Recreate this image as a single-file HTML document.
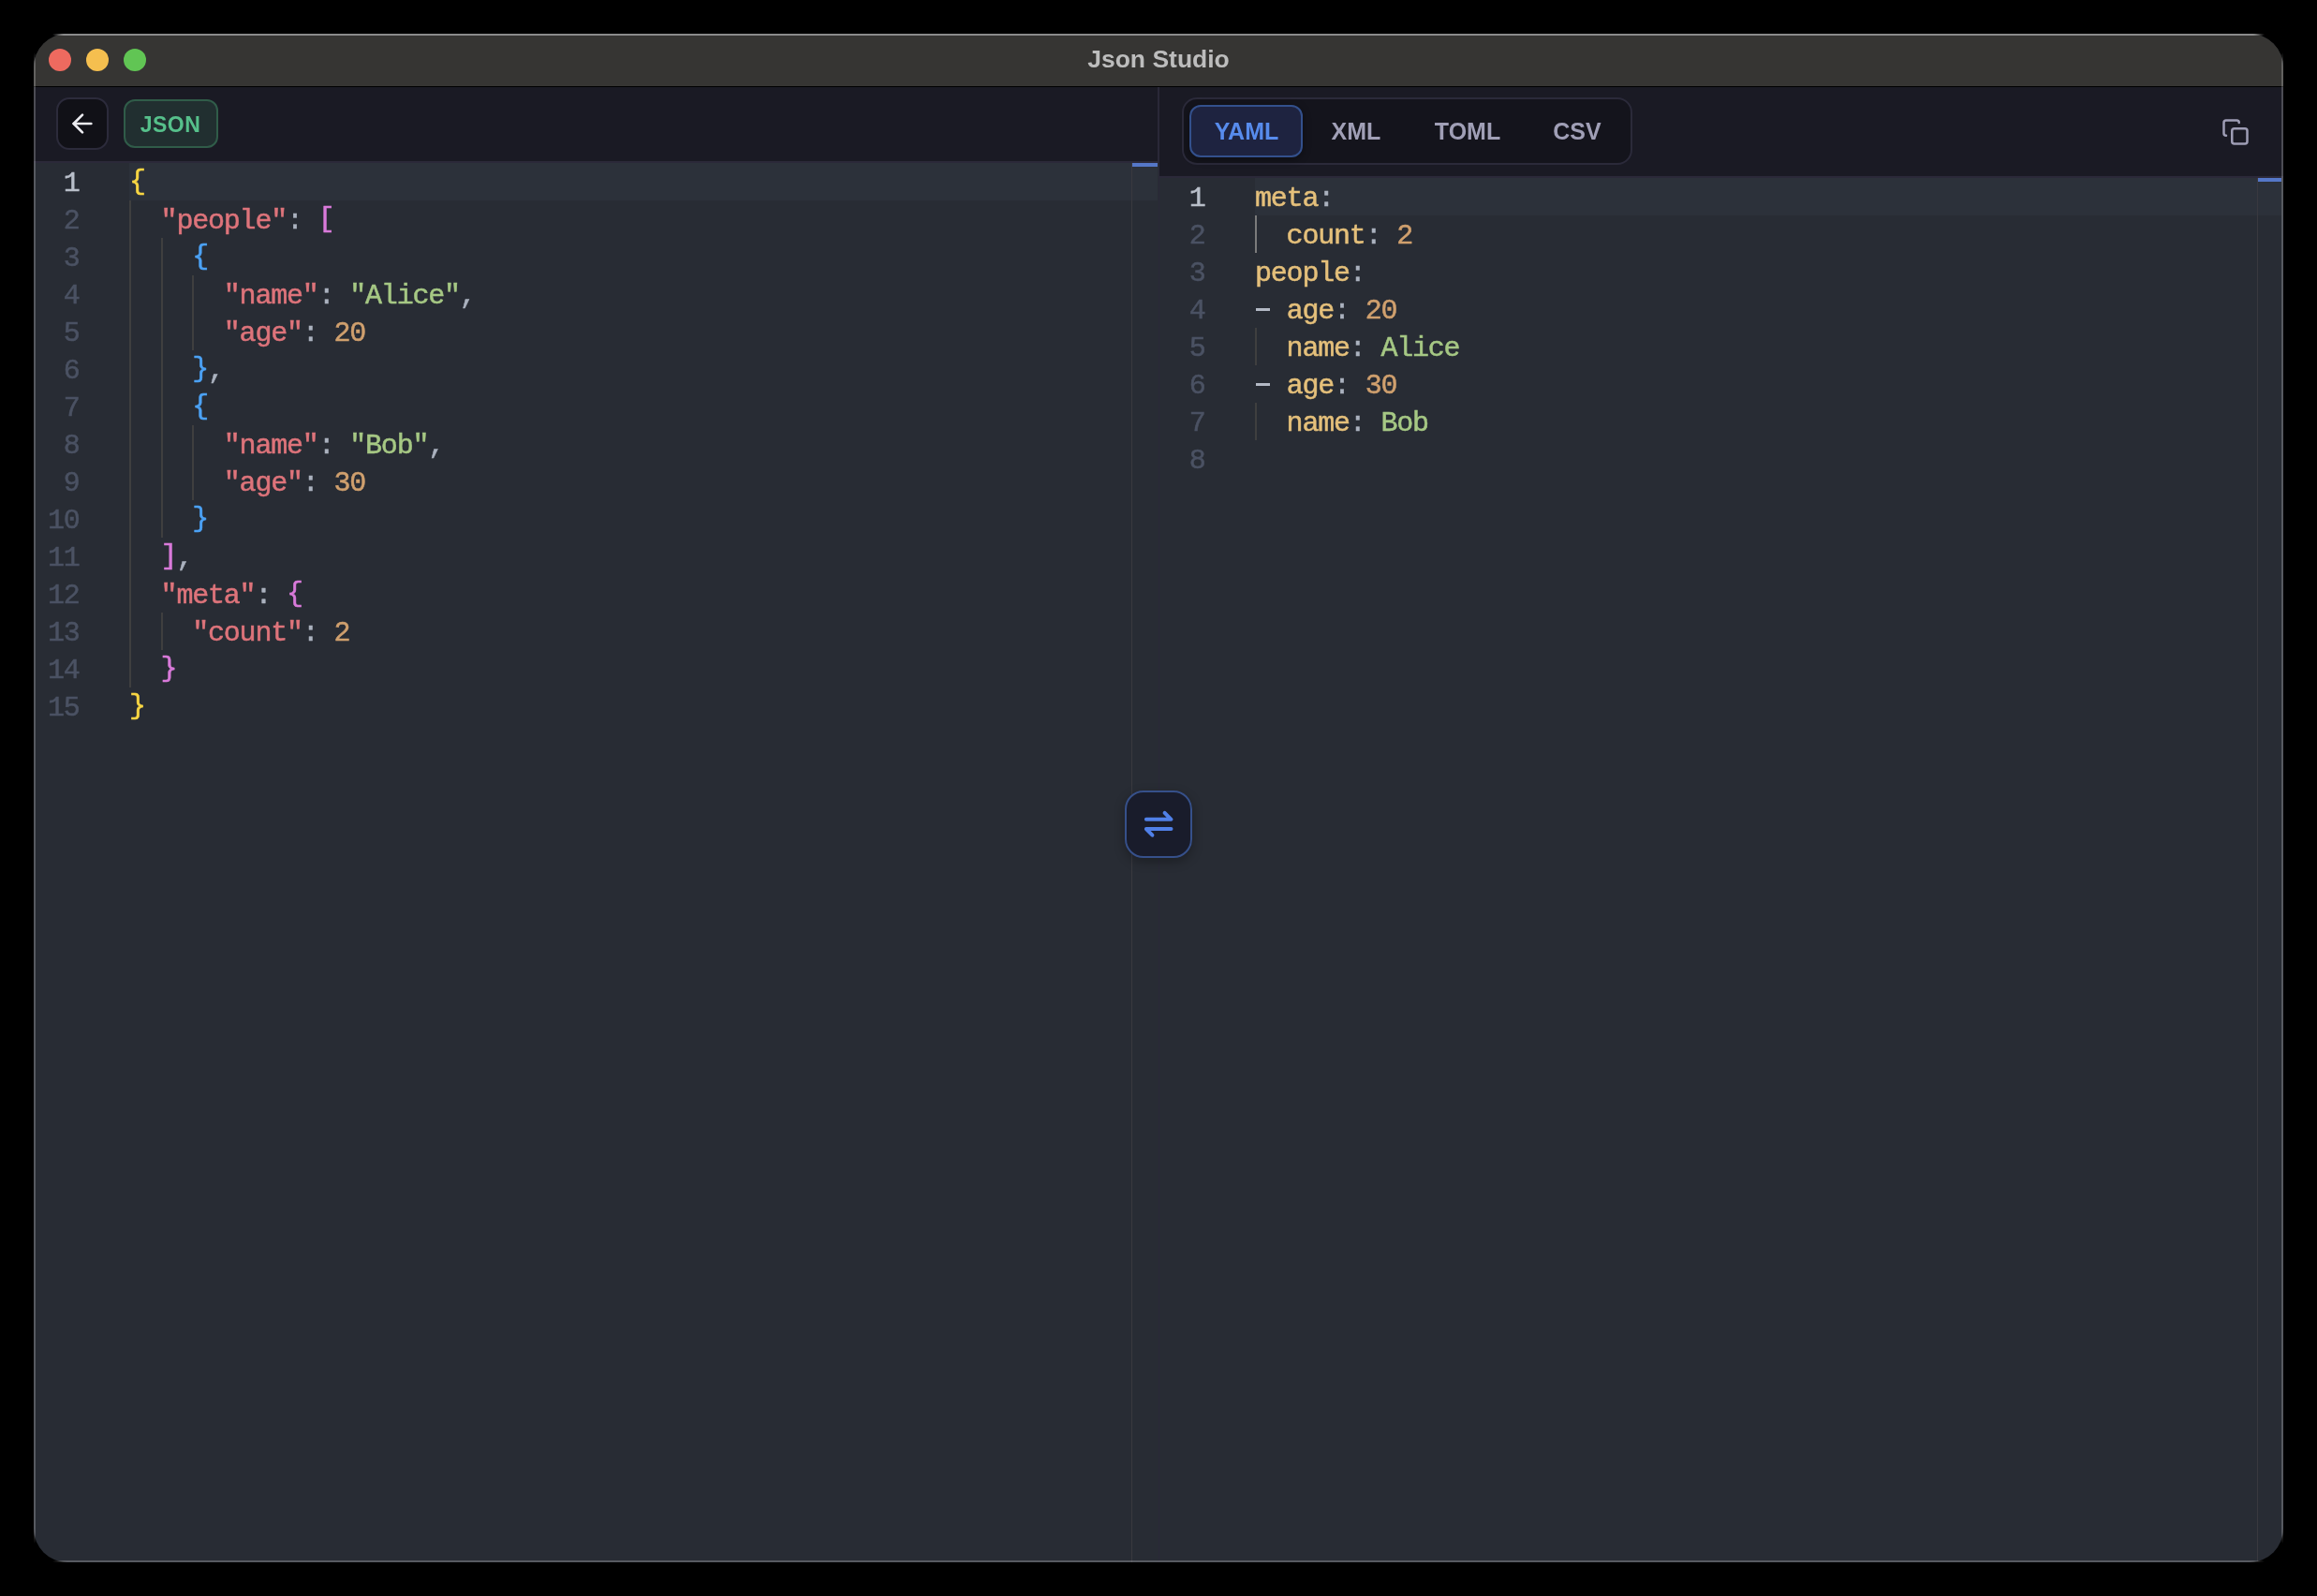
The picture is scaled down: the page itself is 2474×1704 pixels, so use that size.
<!DOCTYPE html>
<html><head><meta charset="utf-8">
<style>
*{box-sizing:border-box;margin:0;padding:0}
html,body{width:2474px;height:1704px;background:#000;overflow:hidden}
body{position:relative;font-family:"Liberation Sans",sans-serif}
.win{position:absolute;left:36px;top:36px;width:2402px;height:1632px;border-radius:36px;overflow:hidden;background:#282c34}
.abs{position:absolute}
.titlebar{position:absolute;left:0;top:0;width:2402px;height:56px;background:#363533}
.title{position:absolute;will-change:transform;left:0;width:2402px;top:10.9px;text-align:center;font-weight:bold;font-size:26.5px;color:#bdbdbd;line-height:32px}
.tl{position:absolute;top:16px;width:24px;height:24px;border-radius:50%}
.tb{position:absolute;top:57px;background:#1a1a24;border-bottom:2px solid #2b2939}
.code{position:absolute;-webkit-text-stroke:0.5px currentColor;will-change:transform;font-family:"Liberation Mono",monospace;font-size:30px;letter-spacing:-1.2029px;line-height:40px;white-space:pre;color:#abb2bf}
.lnr{position:absolute;-webkit-text-stroke:0.5px currentColor;will-change:transform;font-family:"Liberation Mono",monospace;font-size:30px;letter-spacing:-1.2029px;line-height:40px;white-space:pre;color:#4b5263;text-align:right}
.lnr.on{color:#b9bfca}
.k{color:#de747b}.s{color:#a6c884}.n{color:#d0a06e}
.b1{color:#f8d643;position:relative;top:-2px}.b2{color:#d97ada;position:relative;top:-2px}.b3{color:#4ca2f5;position:relative;top:-2px}
.yk{color:#e5c07b}
.dash{position:relative;color:transparent;-webkit-text-stroke:0}
.dash::after{content:"";position:absolute;left:0.5px;width:15px;top:14.4px;height:3px;background:#b3b9c5}
.guide{position:absolute;width:2px;background:#3f3f3f}
.guide.act{background:#7b7b7b}
.tabt{position:absolute;will-change:transform;font-weight:bold;font-size:25px;line-height:30px;top:88.5px;color:#a09fb6;white-space:nowrap;text-align:center;width:200px}
</style></head><body>
<div class="win">
  <div class="titlebar">
    <div class="tl" style="left:16px;background:#ee6a5f"></div>
    <div class="tl" style="left:56px;background:#f5bf4f"></div>
    <div class="tl" style="left:96px;background:#61c554"></div>
    <div class="title">Json Studio</div>
  </div>
  <div class="abs" style="left:0;top:56px;width:2402px;height:1px;background:#000"></div>
  <!-- left toolbar -->
  <div class="tb" style="left:0;width:1200px;height:81px"></div>
  <!-- right toolbar -->
  <div class="tb" style="left:1202px;width:1200px;height:97px"></div>
  <!-- divider -->
  <div class="abs" style="left:1200px;top:57px;width:2px;height:1580px;background:#2a2838"></div>
  <div class="abs" style="left:1200px;top:138px;width:0.5px;height:1500px;background:#282c34"></div>

  <!-- back button -->
  <div class="abs" style="left:24px;top:68px;width:56px;height:56px;border-radius:14px;border:2px solid #2c2b3b;background:#111117"></div>
  <svg class="abs" style="left:35.9px;top:79.9px" width="32" height="32" viewBox="0 0 24 24" fill="none" stroke="#ececf1" stroke-width="2" stroke-linecap="round" stroke-linejoin="round"><path d="m12 19-7-7 7-7"/><path d="M19 12H5"/></svg>
  <!-- JSON badge -->
  <div class="abs" style="left:96px;top:70px;width:101px;height:52px;border-radius:12px;border:2px solid #305c49;background:#212f30"></div>
  <div class="abs" style="left:46.2px;width:200px;text-align:center;top:81.8px;will-change:transform;font-weight:bold;font-size:23px;letter-spacing:0.5px;line-height:30px;color:#56c08b">JSON</div>

  <!-- tabs -->
  <div class="abs" style="left:1226px;top:68px;width:481px;height:72px;border-radius:16px;border:2px solid #2b2a3a;background:#14141c"></div>
  <div class="abs" style="left:1234px;top:76px;width:121px;height:56px;border-radius:12px;border:2px solid #33508c;background:#1e2340;box-shadow:0 2px 8px rgba(0,0,0,.35)"></div>
  <div class="tabt" style="left:1194.5px;color:#578bec">YAML</div>
  <div class="tabt" style="left:1312px">XML</div>
  <div class="tabt" style="left:1430.7px">TOML</div>
  <div class="tabt" style="left:1547.8px">CSV</div>
  <!-- copy icon -->
  <svg class="abs" style="left:2335.7px;top:89.9px" width="30" height="30" viewBox="0 0 24 24" fill="none" stroke="#9e9db5" stroke-width="2" stroke-linecap="round" stroke-linejoin="round"><rect x="9" y="9" width="13" height="13" rx="2" ry="2"/><path d="M4 15a2 2 0 0 1-2-2V4a2 2 0 0 1 2-2h9a2 2 0 0 1 2 2"/></svg>

  <!-- left editor -->
  <div class="abs" style="left:102px;top:138px;width:1098px;height:40px;background:#2c313a"></div>
  <div class="abs" style="left:1172px;top:138px;width:1px;height:1500px;background:#39393f"></div>
  <div class="abs" style="left:1173px;top:138px;width:27px;height:4px;background:#5577c8"></div>
<div class="guide" style="left:102.00px;top:178.0px;height:520px"></div>
<div class="guide" style="left:135.60px;top:218.0px;height:320px"></div>
<div class="guide" style="left:135.60px;top:618.0px;height:40px"></div>
<div class="guide" style="left:169.20px;top:258.0px;height:80px"></div>
<div class="guide" style="left:169.20px;top:418.0px;height:80px"></div>
<div class="lnr on" style="top:140.2px;left:0;width:48.5px">1</div>
<div class="lnr" style="top:180.2px;left:0;width:48.5px">2</div>
<div class="lnr" style="top:220.2px;left:0;width:48.5px">3</div>
<div class="lnr" style="top:260.2px;left:0;width:48.5px">4</div>
<div class="lnr" style="top:300.2px;left:0;width:48.5px">5</div>
<div class="lnr" style="top:340.2px;left:0;width:48.5px">6</div>
<div class="lnr" style="top:380.2px;left:0;width:48.5px">7</div>
<div class="lnr" style="top:420.2px;left:0;width:48.5px">8</div>
<div class="lnr" style="top:460.2px;left:0;width:48.5px">9</div>
<div class="lnr" style="top:500.2px;left:0;width:48.5px">10</div>
<div class="lnr" style="top:540.2px;left:0;width:48.5px">11</div>
<div class="lnr" style="top:580.2px;left:0;width:48.5px">12</div>
<div class="lnr" style="top:620.2px;left:0;width:48.5px">13</div>
<div class="lnr" style="top:660.2px;left:0;width:48.5px">14</div>
<div class="lnr" style="top:700.2px;left:0;width:48.5px">15</div>
  <div class="code" style="left:102px;top:140.2px"><span class="b1">{</span>
  <span class="k">"people"</span><span class="p">: </span><span class="b2">[</span>
    <span class="b3">{</span>
      <span class="k">"name"</span><span class="p">: </span><span class="s">"Alice"</span><span class="p">,</span>
      <span class="k">"age"</span><span class="p">: </span><span class="n">20</span>
    <span class="b3">}</span><span class="p">,</span>
    <span class="b3">{</span>
      <span class="k">"name"</span><span class="p">: </span><span class="s">"Bob"</span><span class="p">,</span>
      <span class="k">"age"</span><span class="p">: </span><span class="n">30</span>
    <span class="b3">}</span>
  <span class="b2">]</span><span class="p">,</span>
  <span class="k">"meta"</span><span class="p">: </span><span class="b2">{</span>
    <span class="k">"count"</span><span class="p">: </span><span class="n">2</span>
  <span class="b2">}</span>
<span class="b1">}</span></div>

  <!-- right editor -->
  <div class="abs" style="left:1304px;top:154px;width:1096px;height:40px;background:#2c313a"></div>
  <div class="abs" style="left:2374px;top:154px;width:1px;height:1500px;background:#39393f"></div>
  <div class="abs" style="left:2375px;top:154px;width:25px;height:4px;background:#5577c8"></div>
<div class="guide act" style="left:1304.00px;top:194.0px;height:40px"></div>
<div class="guide" style="left:1304.00px;top:314.0px;height:40px"></div>
<div class="guide" style="left:1304.00px;top:394.0px;height:40px"></div>
<div class="lnr on" style="top:156.2px;left:1202px;width:48.5px">1</div>
<div class="lnr" style="top:196.2px;left:1202px;width:48.5px">2</div>
<div class="lnr" style="top:236.2px;left:1202px;width:48.5px">3</div>
<div class="lnr" style="top:276.2px;left:1202px;width:48.5px">4</div>
<div class="lnr" style="top:316.2px;left:1202px;width:48.5px">5</div>
<div class="lnr" style="top:356.2px;left:1202px;width:48.5px">6</div>
<div class="lnr" style="top:396.2px;left:1202px;width:48.5px">7</div>
<div class="lnr" style="top:436.2px;left:1202px;width:48.5px">8</div>
  <div class="code" style="left:1304px;top:156.2px"><span class="yk">meta</span><span class="p">:</span>
  <span class="yk">count</span><span class="p">: </span><span class="n">2</span>
<span class="yk">people</span><span class="p">:</span>
<span class="dash">-</span> <span class="yk">age</span><span class="p">: </span><span class="n">20</span>
  <span class="yk">name</span><span class="p">: </span><span class="s">Alice</span>
<span class="dash">-</span> <span class="yk">age</span><span class="p">: </span><span class="n">30</span>
  <span class="yk">name</span><span class="p">: </span><span class="s">Bob</span>
</div>

  <!-- swap button -->
  <div class="abs" style="left:1165px;top:808px;width:72px;height:72px;border-radius:20px;border:2px solid #36508a;background:#191c2b;box-shadow:0 4px 12px rgba(0,0,0,.3)"></div>
  <svg class="abs" style="left:1165px;top:808px" width="72" height="72" viewBox="1201 844 72 72" fill="none" stroke="#5080e8" stroke-width="4" stroke-linecap="round" stroke-linejoin="round"><path d="M1223.9 874.8H1250.5L1243.6 867.9"/><path d="M1250.5 885.1H1223.9L1230.4 891.7"/></svg>
</div>
<div class="abs" style="left:56px;top:36px;width:2362px;height:2px;background:linear-gradient(to right,rgba(139,139,139,0),#8b8b8b 12px,#8b8b8b calc(100% - 12px),rgba(139,139,139,0))"></div>
<div class="abs" style="left:36px;top:56px;width:2px;height:1592px;background:linear-gradient(to bottom,rgba(255,255,255,0),rgba(255,255,255,0.22) 12px,rgba(255,255,255,0.22) calc(100% - 12px),rgba(255,255,255,0))"></div>
<div class="abs" style="left:2436px;top:56px;width:2px;height:1592px;background:linear-gradient(to bottom,rgba(255,255,255,0),rgba(255,255,255,0.22) 12px,rgba(255,255,255,0.22) calc(100% - 12px),rgba(255,255,255,0))"></div>
<div class="abs" style="left:56px;top:1666px;width:2362px;height:2px;background:linear-gradient(to right,rgba(255,255,255,0),rgba(255,255,255,0.22) 12px,rgba(255,255,255,0.22) calc(100% - 12px),rgba(255,255,255,0))"></div>
</body></html>
